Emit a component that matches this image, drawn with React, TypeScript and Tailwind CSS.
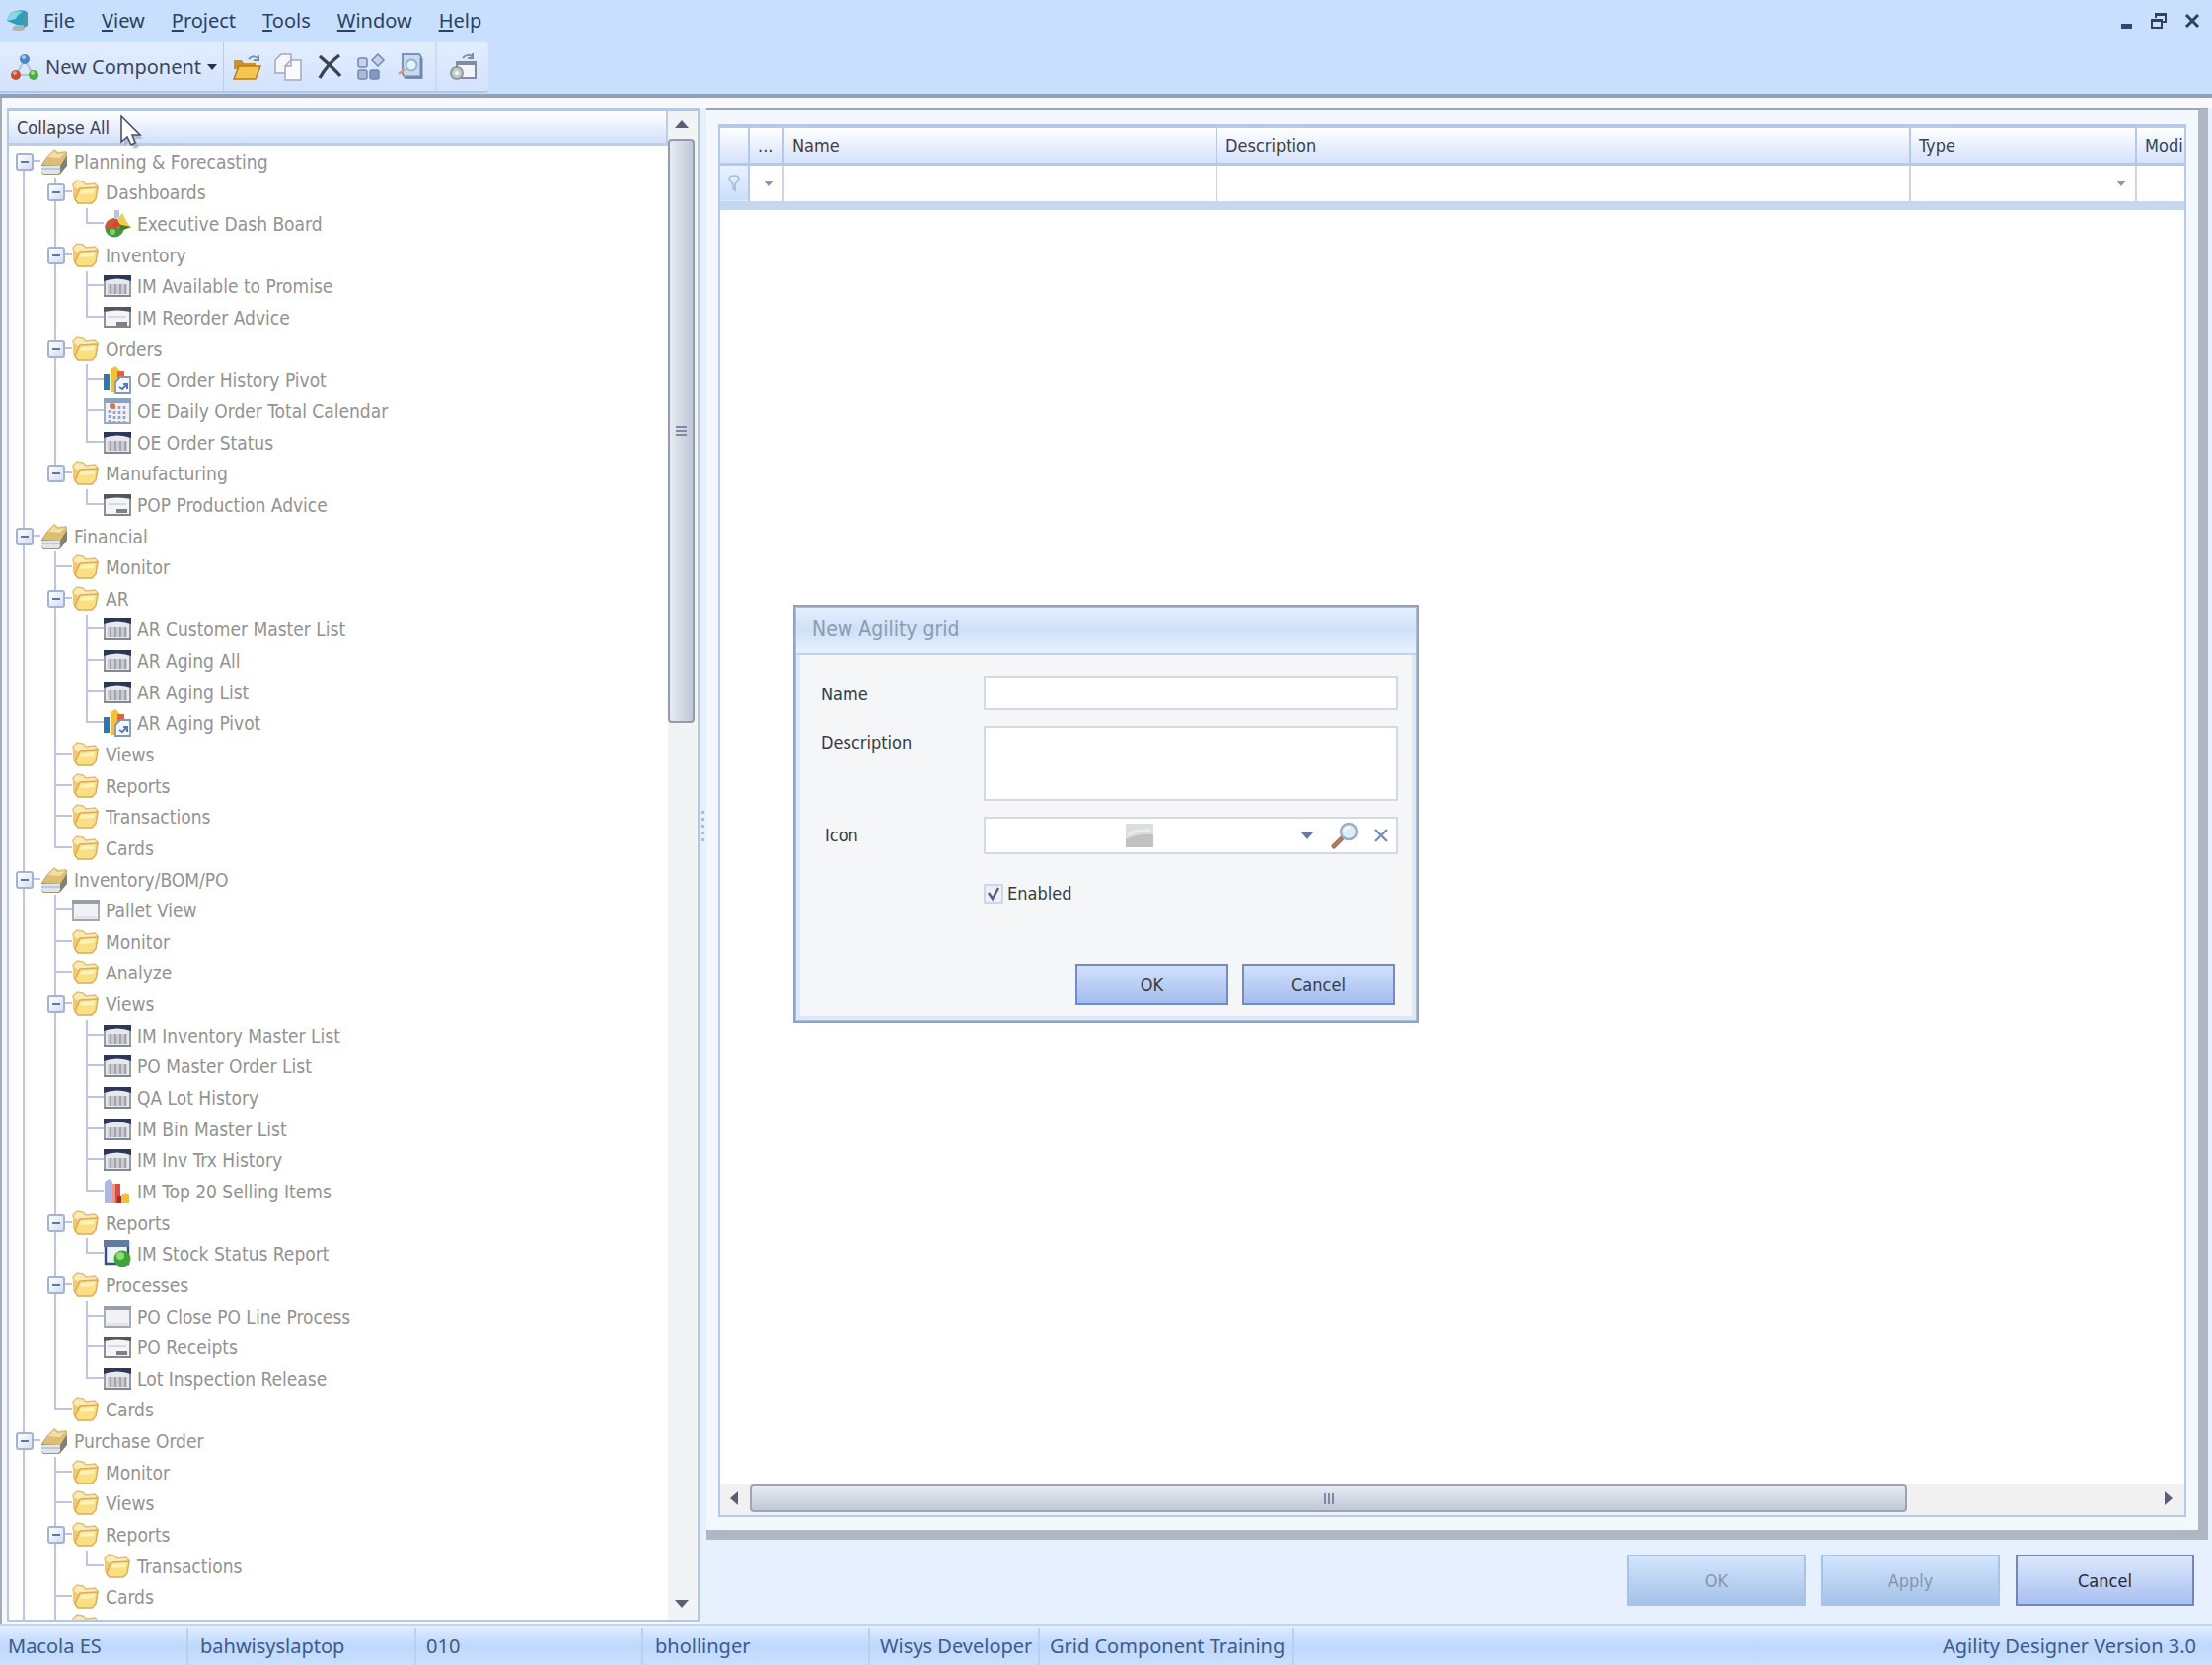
// src/App.tsx
import { Fragment } from 'react';
import type { ReactNode } from 'react';

type IconName = 'stack' | 'folder' | 'gauge' | 'grid' | 'form' | 'pivot' | 'calendar' | 'blank' | 'chart' | 'report';

interface TreeNode {
  label: string;
  icon: IconName;
  children?: TreeNode[];
}

const folder = (label: string, children?: TreeNode[]): TreeNode => ({ label, icon: 'folder', children });
const item = (label: string, icon: IconName = 'grid'): TreeNode => ({ label, icon });

const tree: TreeNode[] = [
  {
    label: 'Planning & Forecasting',
    icon: 'stack',
    children: [
      folder('Dashboards', [item('Executive Dash Board', 'gauge')]),
      folder('Inventory', [item('IM Available to Promise'), item('IM Reorder Advice', 'form')]),
      folder('Orders', [
        item('OE Order History Pivot', 'pivot'),
        item('OE Daily Order Total Calendar', 'calendar'),
        item('OE Order Status'),
      ]),
      folder('Manufacturing', [item('POP Production Advice', 'form')]),
    ],
  },
  {
    label: 'Financial',
    icon: 'stack',
    children: [
      folder('Monitor'),
      folder('AR', [
        item('AR Customer Master List'),
        item('AR Aging All'),
        item('AR Aging List'),
        item('AR Aging Pivot', 'pivot'),
      ]),
      folder('Views'),
      folder('Reports'),
      folder('Transactions'),
      folder('Cards'),
    ],
  },
  {
    label: 'Inventory/BOM/PO',
    icon: 'stack',
    children: [
      item('Pallet View', 'blank'),
      folder('Monitor'),
      folder('Analyze'),
      folder('Views', [
        item('IM Inventory Master List'),
        item('PO Master Order List'),
        item('QA Lot History'),
        item('IM Bin Master List'),
        item('IM Inv Trx History'),
        item('IM Top 20 Selling Items', 'chart'),
      ]),
      folder('Reports', [item('IM Stock Status Report', 'report')]),
      folder('Processes', [
        item('PO Close PO Line Process', 'blank'),
        item('PO Receipts', 'form'),
        item('Lot Inspection Release'),
      ]),
      folder('Cards'),
    ],
  },
  {
    label: 'Purchase Order',
    icon: 'stack',
    children: [folder('Monitor'), folder('Views'), folder('Reports', [folder('Transactions')]), folder('Cards')],
  },
];

export default function App() {
  return (
    <div className="relative flex h-screen flex-col overflow-hidden bg-[#e6f0fe] font-['DejaVu_Sans_Condensed','Noto_Sans',sans-serif] text-[18px] text-[#3c3f4a]">
      <MenuBar />
      <Toolbar />

      <main className="flex min-h-0 flex-1 border-l-2 border-[#a3adbb] bg-[#f6f8fb] pt-[10px]">
        <TreePanel />
        <Splitter />
        <div className="flex min-w-0 flex-1 flex-col bg-[#e6f0fe]">
          <GridPanel />
          <div className="flex justify-end gap-4 pt-[15px] pr-[18px] pb-[18px]">
            <PanelButton disabled>OK</PanelButton>
            <PanelButton disabled>Apply</PanelButton>
            <PanelButton>Cancel</PanelButton>
          </div>
        </div>
      </main>

      <StatusBar />

      {/* Modal */}
      <div className="absolute inset-0 flex items-start justify-center pt-[613px]">
        <NewGridDialog />
      </div>

      <svg className="absolute top-[117px] left-[121px] h-9 w-6" viewBox="0 0 24 36">
        <path d="M5 4v27l6-5 4 8 5-2-4-8h8z" fill="#9aa3b5" opacity=".6" />
        <path d="M2 1v26l6-5 4 8 4-2-3-8h8z" fill="#fff" stroke="#4d5366" strokeWidth="1.6" />
      </svg>
    </div>
  );
}

// --- Menu ---
function MenuBar() {
  const menus = ['File', 'View', 'Project', 'Tools', 'Window', 'Help'];
  return (
    <header className="flex h-[43px] items-center bg-[#c9dffe] pr-3 pb-[2px] pl-[6px] font-['Noto_Sans',sans-serif] text-[20px] text-[#2b4263]">
      <svg className="h-6 w-6" viewBox="0 0 24 24">
        <path d="M4 4q9-4 16-2v12q-3 4-9 2L1 12z" fill="#2b9dbd" />
        <path d="M4 4q8-3 13-1-5 2-7 7l-9 2z" fill="#8ad6e2" />
        <path d="m20 2 2 2v13l-4 2-1-4z" fill="#5c90a6" />
        <path d="m8 17 9-1 2 5q-7 2-13 0z" fill="#a9b8b4" />
      </svg>
      <nav className="ml-[14px] flex gap-[27px]">
        {menus.map((m) => (
          <button key={m} type="button">
            <span className="underline decoration-2 underline-offset-2">{m[0]}</span>
            {m.slice(1)}
          </button>
        ))}
      </nav>
      <div className="ml-auto flex items-center gap-[18px]">
        <button type="button" aria-label="Minimize">
          <svg className="h-4 w-4" viewBox="0 0 16 16">
            <path d="M4 11h11v5H4z" fill="#2b4a75" />
          </svg>
        </button>
        <button type="button" aria-label="Restore">
          <svg className="h-[18px] w-4" viewBox="0 0 16 18" fill="none" stroke="#33425a" strokeWidth="2">
            <path d="M5 6V2h10v8h-4M5 3h10" />
            <path d="M1 8h10v8H1zM1 9h10" />
          </svg>
        </button>
        <button type="button" aria-label="Close">
          <svg className="h-4 w-4" viewBox="0 0 16 16" stroke="#2b4263" strokeWidth="3">
            <path d="m2 2 12 12M14 2 2 14" />
          </svg>
        </button>
      </div>
    </header>
  );
}

// --- Toolbar ---
function Toolbar() {
  return (
    <div className="flex h-14 border-b-4 border-[#919eb3] bg-[#c9dffe] font-['Noto_Sans',sans-serif]">
      <div className="flex h-[51px] items-center rounded-r border-b-2 border-[#b4c7e2] bg-gradient-to-b from-[#e2edff] to-[#d3e3fd] pl-[10px] text-[20px] text-[#38465f]">
        <button type="button" className="flex items-center gap-[6px] pr-[6px]">
          <svg className="h-[30px] w-[30px]" viewBox="0 0 30 30">
            <path d="M15 8 6 23h18z" fill="none" stroke="#b8c2cf" strokeWidth="2" />
            <circle cx="15" cy="7" r="5" fill="#4a86c8" />
            <circle cx="6" cy="23" r="5" fill="#c9502d" />
            <circle cx="24" cy="23" r="5" fill="#4cae3c" />
            <circle cx="14" cy="5" r="2" fill="#a9cdf0" />
            <circle cx="5" cy="21" r="2" fill="#eba07f" />
            <circle cx="23" cy="21" r="2" fill="#a4df96" />
          </svg>
          New Component
          <svg className="h-[6px] w-[10px]" viewBox="0 0 10 6">
            <path d="M0 0h10L5 6z" fill="#2c3444" />
          </svg>
        </button>
        <div className="flex h-full items-center gap-3 border-l border-[#b9cbe6] px-2">
          <ToolButton label="Open">
            <path d="M2 8h8l2 3h12v6H2z" fill="#c9952a" />
            <path d="M2 27 7 14h22l-5 13z" fill="#f4c64f" stroke="#b57f1e" strokeWidth="1.5" />
            <path d="M17 7c4-4 8-3 10 0m0-4v5h-5" fill="none" stroke="#6f8fbb" strokeWidth="2" />
          </ToolButton>
          <ToolButton label="Copy">
            <path d="M8 2h10v19H2V8z" fill="#f5f6f9" stroke="#a4a9b5" strokeWidth="1.5" />
            <path d="M18 8h10v20H12V14z" fill="#fbfbfd" stroke="#a4a9b5" strokeWidth="1.5" />
            <path d="M18 8v6h-6" fill="none" stroke="#a4a9b5" strokeWidth="1.5" />
          </ToolButton>
          <ToolButton label="Delete">
            <path d="M5 4C12 10 20 17 26 24M25 3C17 9 10 17 5 26" fill="none" stroke="#3d434e" strokeWidth="3.4" />
          </ToolButton>
          <ToolButton label="Components">
            <g fill="#c3d3ea" stroke="#7388b0" strokeWidth="1.5">
              <rect x="2" y="6" width="9" height="9" rx="2" />
              <path d="m22 2 6 6-6 6-6-6z" />
              <rect x="2" y="18" width="9" height="9" rx="2" fill="#a9bad6" />
              <rect x="14" y="18" width="9" height="9" rx="2" fill="#8398be" />
            </g>
          </ToolButton>
          <ToolButton label="Preview">
            <path d="M5 2h17l2 3v21H8l-3-4z" fill="#c6dcee" stroke="#7f94b4" strokeWidth="2" />
            <path d="M8 25h16V6" fill="none" stroke="#7188aa" strokeWidth="3" />
            <circle cx="14" cy="13" r="5.5" fill="#e3f3fa" stroke="#8fb4cf" strokeWidth="2" />
            <path d="m1 22 6-5" stroke="#d59a86" strokeWidth="2.5" />
          </ToolButton>
        </div>
        <div className="flex h-full items-center border-l-2 border-[#c9dbf5] pr-[10px] pl-3">
          <ToolButton label="Export">
            <path d="M8 10h19v16H8z" fill="#f1f5fa" stroke="#7f8ca3" strokeWidth="2" />
            <path d="M8 11h19" stroke="#7f8ca3" strokeWidth="4" />
            <path d="M14 6c3-4 8-4 10-1m0-4v5h-5" fill="none" stroke="#7f8ca3" strokeWidth="2" />
            <circle cx="8" cy="21" r="6" fill="#c4cec9" stroke="#8d9a9b" strokeWidth="2" />
            <circle cx="8" cy="21" r="2" fill="#f1f5fa" />
          </ToolButton>
        </div>
      </div>
    </div>
  );
}

function ToolButton({ label, children }: { label: string; children: ReactNode }) {
  return (
    <button type="button" aria-label={label}>
      <svg className="h-[30px] w-[30px]" viewBox="0 0 30 30">
        {children}
      </svg>
    </button>
  );
}

// --- Tree ---
function TreePanel() {
  return (
    <section className="mb-[2px] ml-[5px] flex w-[702px] shrink-0 border-2 border-t-4 border-[#b3c8e4] bg-white">
      <div className="flex min-w-0 flex-1 flex-col">
        <button
          type="button"
          className="flex h-[35px] shrink-0 items-center border-r-2 border-b-[3px] border-[#bccdea] bg-gradient-to-b from-white to-[#d3e0fb] pl-2 text-left"
        >
          Collapse All
        </button>
        <div className="flex min-h-0 flex-1 flex-col overflow-hidden text-[19px] text-[#929292]">
          {tree.map((node, i) => (
            <Branch key={node.label} node={node} guides={[]} first={i === 0} last={false} />
          ))}
          {/* next row, cut off by the panel edge */}
          <div className="flex h-[7px] shrink-0 overflow-hidden">
            <Guide kind="line" />
            <Guide kind="line" />
            <NodeIcon name="folder" />
          </div>
        </div>
      </div>
      <div className="flex w-[30px] flex-col items-center bg-[#f2f3f5] pr-[3px]">
        <Arrow className="mt-2 mb-[10px] h-[10px] w-4 shrink-0 rotate-180" />
        <div className="min-h-0 w-full flex-1">
          <div className="flex h-[40%] w-full items-center justify-center rounded-sm border-2 border-[#939cac] bg-gradient-to-r from-[#e8ebf2] to-[#c0c8d6]">
            <Grip className="h-[11px] w-[11px]" />
          </div>
        </div>
        <Arrow className="mb-[11px] h-[10px] w-4 shrink-0" />
      </div>
    </section>
  );
}

interface BranchProps {
  node: TreeNode;
  guides: boolean[];
  first?: boolean;
  last: boolean;
}

function Branch({ node, guides, first, last }: BranchProps) {
  const open = !!node.children;
  return (
    <Fragment>
      <div className="flex min-h-0 flex-1 items-center">
        {guides.map((on, i) => (
          <Guide key={i} kind={on ? 'line' : 'none'} />
        ))}
        <Guide kind={first ? 'start' : last ? 'end' : 'tee'}>
          {open && (
            <button
              type="button"
              aria-label={`Collapse ${node.label}`}
              className="flex h-[18px] w-[18px] items-center justify-center rounded-[3px] border-2 border-[#a3b3d0] bg-gradient-to-br from-white to-[#d3def3]"
            >
              <span className="h-[2px] w-2 bg-[#5f77a8]" />
            </button>
          )}
        </Guide>
        <NodeIcon name={node.icon} />
        <span className="ml-[6px] leading-6 whitespace-nowrap">{node.label}</span>
      </div>
      {node.children?.map((child, i) => (
        <Branch
          key={child.label}
          node={child}
          guides={[...guides, !last]}
          last={i === node.children!.length - 1 && node.label !== 'Purchase Order'}
        />
      ))}
    </Fragment>
  );
}

type GuideKind = 'none' | 'line' | 'tee' | 'end' | 'start';

function Guide({ kind, children }: { kind: GuideKind; children?: ReactNode }) {
  const up = kind === 'line' || kind === 'tee' || kind === 'end';
  const down = kind === 'line' || kind === 'tee' || kind === 'start';
  const across = kind === 'tee' || kind === 'end' || kind === 'start';
  return (
    <div className="relative grid h-full w-8 shrink-0 grid-cols-2 grid-rows-2">
      <span className={`border-r-2 ${up ? 'border-[#bcc6e2]' : 'border-transparent'}`} />
      <span className={`border-b-2 ${across ? 'border-[#bcc6e2]' : 'border-transparent'}`} />
      <span className={`border-r-2 ${down ? 'border-[#bcc6e2]' : 'border-transparent'}`} />
      <span className="absolute inset-0 flex items-center justify-center">{children}</span>
    </div>
  );
}

function NodeIcon({ name }: { name: IconName }) {
  return (
    <svg className="h-7 w-7 shrink-0" viewBox="0 0 28 28">
      {icons[name]}
    </svg>
  );
}

const icons: Record<IconName, ReactNode> = {
  stack: (
    <>
      <path d="M1 17 7 8l20-4v13l-6 8-2 2H3l-2-2z" fill="#a39672" />
      <path d="M20 17 27 8v10l-7 8z" fill="#85816f" />
      <path d="M1 18h19v6l-2 2H3l-2-2z" fill="#dfe5ee" />
      <path d="M1 21h19" stroke="#b4bccb" strokeWidth="1.4" />
      <path d="M2 17 8 7l6-6 4 3 8-1 1 4-7 11z" fill="#dcbf74" />
      <path d="m8 9 6-6 3 3 8-1-5 5z" fill="#f1dfa6" />
    </>
  ),
  folder: (
    <>
      <path d="M1 6 5 2l6 1 3 3 9-1 3 3-1 4H2z" fill="#fbeab5" stroke="#e3bd75" strokeWidth="1.4" />
      <path d="M1 8v11l3 5 3-13z" fill="#efc978" />
      <path d="m8 10 18-1-2 12-4 4H6L3 21z" fill="#fbe083" stroke="#d9ac5c" strokeWidth="1.5" />
      <path d="m9 12 14-1-1 4-14 1z" fill="#fff2b8" />
    </>
  ),
  gauge: (
    <>
      <circle cx="11" cy="18" r="9.5" fill="#3d9b3c" />
      <path d="M1 18a10 10 0 0 1 10-10v9z" fill="#dd5238" />
      <path d="M11 0h5v8h-5z" fill="#bcc3e4" />
      <path d="m14 10 5-7 4 8 5 7H14z" fill="#edcf4d" />
      <path d="m14 14 14 3-10 4z" fill="#477f34" />
      <path d="m8 18 5-10 5 9z" fill="#e3432c" />
      <circle cx="9" cy="22" r="3" fill="#86cf72" />
    </>
  ),
  grid: (
    <>
      <path d="M1 4h26v20H1z" fill="#e6e8ee" stroke="#8f939c" strokeWidth="1.8" />
      <path d="M0 3h28v6Q14 4 0 9z" fill="#2c3858" />
      <path d="M4 12h20v10H4z" fill="#c9cbd0" />
      <path d="M7 12v10M12 12v10M17 12v10M22 12v10" stroke="#a0a3aa" strokeWidth="2" />
      <path d="M0 24h28" stroke="#84878e" strokeWidth="2" />
    </>
  ),
  form: (
    <>
      <path d="M1 4h26v20H1z" fill="#f4f5f6" stroke="#83868c" strokeWidth="1.8" />
      <path d="M0 3h28v5Q14 5 0 8z" fill="#54575d" />
      <path d="M4 13h19" stroke="#cfd1d4" strokeWidth="1.5" />
      <path d="M13 18h11v4H13z" fill="#7d8086" />
    </>
  ),
  pivot: (
    <>
      <path d="M0 8h6v16H0z" fill="#2f78ae" />
      <path d="m7 3 5-3 4 4v22H7z" fill="#f2c13c" />
      <path d="M14 5h7v8h-7z" fill="#d9683f" />
      <path d="m12 16 5-5h10v16H12z" fill="#f4f7fc" stroke="#8697b5" strokeWidth="1.8" />
      <path d="m16 21 3 2 5-5m0 5v-5h-4" fill="none" stroke="#5a78b0" strokeWidth="2" />
    </>
  ),
  calendar: (
    <>
      <path d="M1 2h26v24H1z" fill="#eef1f7" stroke="#98a5bd" strokeWidth="1.8" />
      <path d="M0 1h28v5H0z" fill="#8fa1c0" />
      <path d="M6 13v12M11 9v16M16 9v16M21 9v16" stroke="#9ba3b3" strokeWidth="2.6" strokeDasharray="3 2" />
      <circle cx="9" cy="9" r="3" fill="#d7774a" />
    </>
  ),
  blank: (
    <>
      <path d="M1 4h26v20H1z" fill="#f0f2f6" stroke="#a1a6af" strokeWidth="1.8" />
      <path d="M0 3h28v4H0z" fill="#999faa" />
      <path d="M3 20h22v3H3z" fill="#e2e4e8" />
    </>
  ),
  chart: (
    <>
      <path d="m1 4 5-3 3 3v22H1z" fill="#a9b9e4" />
      <path d="M9 6h8v20H9z" fill="#dc4c3f" />
      <path d="M9 6h3v20H9z" fill="#f2938a" />
      <path d="M14 19h5v7h-5z" fill="#a82c27" />
      <path d="m18 18 4-3 4 3v8h-8z" fill="#f1bf3d" />
    </>
  ),
  report: (
    <>
      <path d="M2 2h23v22H2z" fill="#eef3fa" stroke="#3a5277" strokeWidth="2.4" />
      <path d="M0 0h26v7H0z" fill="#5d7ba5" />
      <circle cx="19" cy="19" r="8.5" fill="#3ca534" />
      <circle cx="17" cy="16" r="4" fill="#8cdb77" />
    </>
  ),
};

function Splitter() {
  return (
    <div className="flex w-[7px] shrink-0 flex-col items-center justify-center gap-1 bg-[#e6f0fe] pb-20">
      {[0, 1, 2, 3, 4].map((n) => (
        <span key={n} className="h-[3px] w-[3px] bg-[#a9bcd9]" />
      ))}
    </div>
  );
}

// --- Component grid ---
function GridPanel() {
  return (
    <section className="mr-1 flex min-h-0 flex-1 flex-col border-t-[3px] border-r-[10px] border-b-[10px] border-[#b0b7c3] border-t-[#9ba5b1] bg-[#f3f7fe] pt-[14px] pr-3 pb-[13px] pl-3">
      <div className="flex min-h-0 flex-1 flex-col border-2 border-t-4 border-[#b5c9e8] bg-white">
        <table className="w-full table-fixed border-collapse border-b-[9px] border-[#c6d8ee]">
          <colgroup>
            <col className="w-[29px]" />
            <col className="w-[35px]" />
            <col className="w-[439px]" />
            <col />
            <col className="w-[229px]" />
            <col className="w-[49px]" />
          </colgroup>
          <thead>
            <tr className="h-9 bg-gradient-to-b from-white to-[#d3e1fb]">
              {['', '...', 'Name', 'Description', 'Type', 'Modi'].map((h) => (
                <th
                  key={h}
                  className="border-r-2 border-b-[3px] border-[#b5c9e8] p-0 pl-2 text-left font-normal last:border-r-0"
                >
                  {h}
                </th>
              ))}
            </tr>
          </thead>
          <tbody>
            <tr className="h-[42px]">
              <td className="border-r-2 border-[#b5c9e8] bg-gradient-to-b from-[#e9f2fe] to-[#c9dffa] p-0">
                <svg className="mx-auto h-[18px] w-3" viewBox="0 0 12 18">
                  <path d="M1 4c0-4 10-4 10 0L7 10v6l-2-2v-4z" fill="#dfeafa" stroke="#a3bce2" strokeWidth="1.6" />
                </svg>
              </td>
              <td className="border-r-2 border-[#ccd5e2] p-0">
                <FilterSelect label="Filter icon" />
              </td>
              <td className="border-r-2 border-[#ccd5e2] p-0">
                <input aria-label="Filter name" className="h-8 w-full px-2 outline-none" />
              </td>
              <td className="border-r-2 border-[#ccd5e2] p-0">
                <input aria-label="Filter description" className="h-8 w-full px-2 outline-none" />
              </td>
              <td className="border-r-2 border-[#ccd5e2] p-0">
                <FilterSelect label="Filter type" />
              </td>
              <td className="p-0" />
            </tr>
          </tbody>
        </table>

        <div className="mt-auto flex h-8 items-center bg-[#f1f1f2] pb-[2px]">
          <Arrow className="mr-2 ml-[6px] h-[10px] w-4 shrink-0 rotate-90" />
          <div className="min-w-0 flex-1">
            <div className="flex h-7 w-[82%] items-center justify-center rounded-sm border-2 border-[#9ca4b1] bg-gradient-to-b from-[#e9ecf4] to-[#bdc8d6]">
              <Grip className="h-[11px] w-[11px] rotate-90" />
            </div>
          </div>
          <Arrow className="mr-2 h-[10px] w-4 shrink-0 -rotate-90" />
        </div>
      </div>
    </section>
  );
}

function FilterSelect({ label }: { label: string }) {
  return (
    <div className="relative">
      <select aria-label={label} className="block h-8 w-full appearance-none outline-none" />
      <svg className="pointer-events-none absolute top-[13px] right-[9px] h-[6px] w-[10px]" viewBox="0 0 10 6">
        <path d="M0 0h10L5 6z" fill="#8d95ab" />
      </svg>
    </div>
  );
}

function PanelButton({ children, disabled }: { children: ReactNode; disabled?: boolean }) {
  return (
    <button
      type="button"
      disabled={disabled}
      className="h-[52px] w-[181px] border-2 border-[#7086bf] bg-gradient-to-b from-[#dce8fb] to-[#a9bff0] text-[#262c3c] disabled:border-[#a9c3e8] disabled:from-[#d3e5fc] disabled:to-[#a4c2ea] disabled:text-[#8597aa]"
    >
      {children}
    </button>
  );
}

function Arrow({ className }: { className: string }) {
  return (
    <svg className={className} viewBox="0 0 16 10">
      <path d="M1 1h14L8 9z" fill="#5a5f75" />
    </svg>
  );
}

function Grip({ className }: { className: string }) {
  return (
    <svg className={className} viewBox="0 0 11 11" stroke="#8089a0" strokeWidth="2">
      <path d="M0 1h11M0 5h11M0 9h11" />
    </svg>
  );
}

// --- Dialog ---
function NewGridDialog() {
  return (
    <form
      role="dialog"
      aria-label="New Agility grid"
      className="w-[634px] border-[3px] border-[#a9c0e0] bg-[#f5f6f7] text-[#3a3a3e] outline-2 -outline-offset-2 outline-[#93a2b9]"
      onSubmit={(e) => e.preventDefault()}
    >
      <h2 className="flex h-12 items-center border-b-2 border-[#bdd3f0] bg-gradient-to-b from-[#e3effc] via-[#cfe1f8] to-[#e6f2fe] pl-4 text-[21px] text-[#8c9bb0]">
        New Agility grid
      </h2>
      <div className="border-4 border-t-0 border-[#dbe9fb] pt-[21px] pr-[14px] pb-[11px] pl-[21px]">
        <div className="grid grid-cols-[165px_1fr] gap-y-4">
          <label htmlFor="name" className="pt-[5px]">Name</label>
          <input id="name" className="h-[35px] border-2 border-[#d3d9e5] bg-white px-2 outline-none" />
          <label htmlFor="description" className="pt-[3px]">Description</label>
          <textarea id="description" className="h-[76px] resize-none border-2 border-[#d3d9e5] bg-white px-2 outline-none" />
          <label htmlFor="icon" className="pt-[5px] pl-1">Icon</label>
          <div className="flex h-[38px] items-center border-2 border-[#d3d9e5] bg-white pr-2">
            <div className="relative flex h-full flex-1 items-center justify-center pr-2">
              <select id="icon" className="absolute inset-0 appearance-none outline-none" />
              <svg className="pointer-events-none relative h-6 w-7" viewBox="0 0 28 24">
                <path d="M0 0h28v24H0z" fill="#dcdddd" />
                <path d="M0 16q12-6 28-5v13H0z" fill="#bfc2c0" />
                <path d="M2 11q10-5 24-4" fill="none" stroke="#ececec" strokeWidth="3" />
              </svg>
            </div>
            <svg className="mr-[18px] h-[7px] w-3" viewBox="0 0 12 7">
              <path d="M0 0h12L6 7z" fill="#6679ad" />
            </svg>
            <button type="button" aria-label="Search" className="mr-4">
              <svg className="h-7 w-7" viewBox="0 0 28 28">
                <path d="M3 25 13 15" stroke="#a97962" strokeWidth="5" strokeLinecap="round" />
                <circle cx="18" cy="10" r="8" fill="#d5eefa" stroke="#9aaec0" strokeWidth="2.4" />
                <path d="M14 9q2-4 6-3" fill="none" stroke="#fff" strokeWidth="2" />
              </svg>
            </button>
            <button type="button" aria-label="Clear">
              <svg className="h-[14px] w-[14px]" viewBox="0 0 14 14" stroke="#7a8db5" strokeWidth="2.4">
                <path d="m1 1 12 12M13 1 1 13" />
              </svg>
            </button>
          </div>
          <label className="col-start-2 mt-[10px] flex items-center gap-1">
            <span className="relative h-5 w-5">
              <input type="checkbox" defaultChecked className="absolute inset-0 appearance-none border-2 border-[#ccd7e8] bg-[#edf1f7]" />
              <svg className="pointer-events-none absolute inset-0" viewBox="0 0 20 20">
                <path d="m5 9 4 6 6-11" fill="none" stroke="#56627c" strokeWidth="2.6" />
              </svg>
            </span>
            Enabled
          </label>
        </div>
        <div className="mt-[58px] mr-[3px] flex justify-end gap-[14px]">
          <DialogButton>OK</DialogButton>
          <DialogButton>Cancel</DialogButton>
        </div>
      </div>
    </form>
  );
}

function DialogButton({ children }: { children: ReactNode }) {
  return (
    <button type="button" className="h-[42px] w-[155px] border-2 border-[#768bc4] bg-gradient-to-b from-[#d0e1fc] to-[#a5bdee]">
      {children}
    </button>
  );
}

// --- Status bar ---
function StatusBar() {
  return (
    <footer className="flex h-[42px] shrink-0 items-stretch border-t-2 border-[#c4d6ee] bg-gradient-to-b from-[#e3effe] via-[#bfd8fd] to-[#c9e0ff] pt-[2px] font-['Noto_Sans',sans-serif] text-[20px] text-[#3f5a8c]">
      <StatusCell className="w-[191px] pl-2">Macola ES</StatusCell>
      <StatusCell className="w-[231px] pl-3">bahwisyslaptop</StatusCell>
      <StatusCell className="w-[230px] pl-[10px]">010</StatusCell>
      <StatusCell className="w-[230px] pl-3">bhollinger</StatusCell>
      <StatusCell className="w-[172px] pl-[10px]">Wisys Developer</StatusCell>
      <StatusCell className="w-[258px] pl-[10px]">Grid Component Training</StatusCell>
      <div className="ml-auto flex items-center pr-4 whitespace-nowrap">Agility Designer Version 3.0</div>
    </footer>
  );
}

function StatusCell({ className, children }: { className: string; children: ReactNode }) {
  return (
    <div className={`flex items-center border-r-2 border-[#b9d0f1] whitespace-nowrap ${className}`}>{children}</div>
  );
}
